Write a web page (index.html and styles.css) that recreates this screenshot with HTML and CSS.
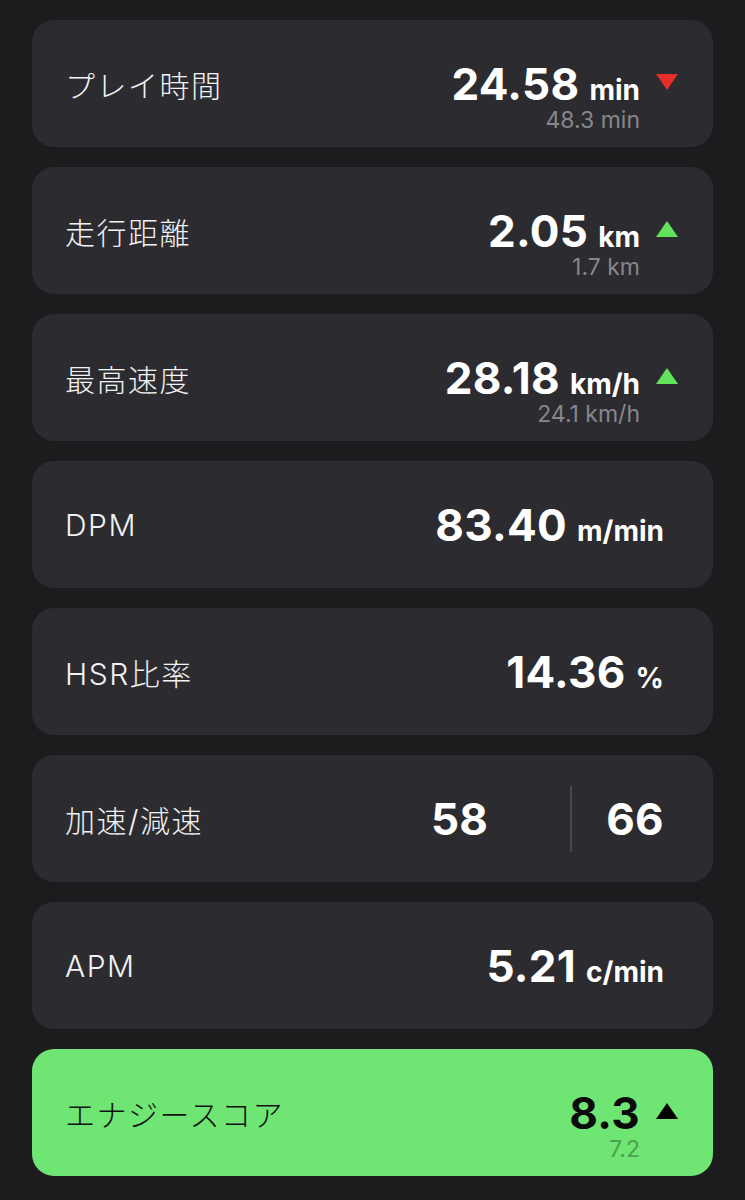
FILE: index.html
```html
<!DOCTYPE html>
<html lang="ja">
<head>
    <meta charset="UTF-8">
    <meta name="viewport" content="width=device-width, initial-scale=1.0">
    <title>試合スタッツ</title>
    <link rel="stylesheet" href="styles.css">
</head>
<body>
    <div class="stats">
        <div class="card has-trend">
            <span class="label">プレイ時間</span>
            <div class="right">
                <div class="value-box">
                    <div class="main"><span class="num">24.58</span><span class="unit">min</span></div>
                    <div class="sub">48.3 min</div>
                </div>
                <span class="arrow down"></span>
            </div>
        </div>

        <div class="card has-trend">
            <span class="label">走行距離</span>
            <div class="right">
                <div class="value-box">
                    <div class="main"><span class="num">2.05</span><span class="unit">km</span></div>
                    <div class="sub">1.7 km</div>
                </div>
                <span class="arrow up"></span>
            </div>
        </div>

        <div class="card has-trend">
            <span class="label">最高速度</span>
            <div class="right">
                <div class="value-box">
                    <div class="main"><span class="num">28.18</span><span class="unit">km/h</span></div>
                    <div class="sub">24.1 km/h</div>
                </div>
                <span class="arrow up"></span>
            </div>
        </div>

        <div class="card">
            <span class="label">DPM</span>
            <div class="right">
                <div class="main"><span class="num">83.40</span><span class="unit">m/min</span></div>
            </div>
        </div>

        <div class="card">
            <span class="label">HSR比率</span>
            <div class="right">
                <div class="main"><span class="num">14.36</span><span class="unit">%</span></div>
            </div>
        </div>

        <div class="card">
            <span class="label">加速/減速</span>
            <div class="right split">
                <span class="num">58</span>
                <span class="divider"></span>
                <span class="num">66</span>
            </div>
        </div>

        <div class="card">
            <span class="label">APM</span>
            <div class="right">
                <div class="main"><span class="num">5.21</span><span class="unit">c/min</span></div>
            </div>
        </div>

        <div class="card has-trend highlight">
            <span class="label">エナジースコア</span>
            <div class="right">
                <div class="value-box">
                    <div class="main"><span class="num">8.3</span></div>
                    <div class="sub">7.2</div>
                </div>
                <span class="arrow up"></span>
            </div>
        </div>
    </div>
</body>
</html>
```

FILE: styles.css
```css
body {
    margin: 0;
    background-color: #1c1c1e;
    font-family: Inter, "Noto Sans CJK JP", sans-serif;
    color: #fff;
}
.stats {
    display: flex;
    flex-direction: column;
    gap: 20px;
    padding: 20px 32px;
}
.card {
    display: flex;
    align-items: center;
    justify-content: space-between;
    height: 127px;
    box-sizing: border-box;
    padding: 0 49px 0 33px;
    background-color: #2c2c30;
    border-radius: 22px;
}
.card.has-trend {
    padding-right: 35px;
}
.label {
    font-family: Inter, "Noto Sans CJK JP", sans-serif;
    font-size: 30px;
    font-weight: 300;
    color: #f2f2f4;
    letter-spacing: 1.5px;
    padding-top: 1px;
}
.right {
    display: flex;
    align-items: center;
}
.value-box {
    display: flex;
    flex-direction: column;
    align-items: flex-end;
}
.main {
    display: flex;
    align-items: baseline;
    height: 44px;
    line-height: 44px;
}
.num {
    font-size: 44px;
    font-weight: 700;
    letter-spacing: 0.3px;
}
.unit {
    font-size: 28px;
    font-weight: 700;
    margin-left: 10px;
}
.sub {
    font-size: 23px;
    line-height: 24px;
    height: 24px;
    margin-top: 2px;
    margin-bottom: -26px;
    color: #86868b;
}
.arrow {
    width: 0;
    height: 0;
    margin-left: 16px;
    margin-top: -4px;
    border-left: 11px solid transparent;
    border-right: 11px solid transparent;
}
.arrow.down {
    border-top: 16px solid #e5302a;
}
.arrow.up {
    border-bottom: 16px solid #62e35c;
}
.split .num:first-child {
    margin-right: 82px;
}
.divider {
    width: 2px;
    height: 66px;
    background-color: #48484c;
    margin-right: 34px;
}
.highlight {
    background-color: #6fe573;
    color: #0a0a0a;
}
.highlight .label {
    color: #111;
}
.highlight .sub {
    color: #4c9f50;
}
.highlight .arrow.up {
    border-bottom-color: #000;
}
```
